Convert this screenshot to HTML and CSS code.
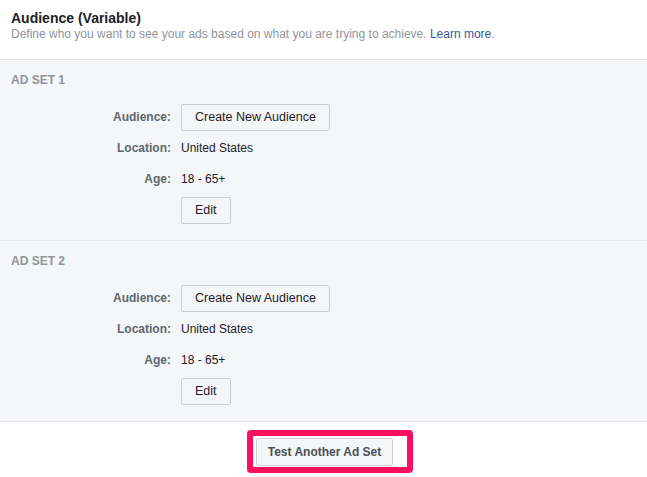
FILE: index.html
```html
<!DOCTYPE html>
<html lang="en">
<head>
<meta charset="utf-8">
<title>Audience (Variable)</title>
<link rel="stylesheet" href="styles.css">
</head>
<body>
<div class="panel">
  <div class="panel-head">
    <div class="title">Audience (Variable)</div>
    <div class="subtitle">Define who you want to see your ads based on what you are trying to achieve. <a class="link" href="#">Learn more</a>.</div>
  </div>
  <div class="sets">
    <section class="adset">
      <div class="adset-name">AD SET 1</div>
      <div class="fields">
        <div class="label">Audience:</div>
        <div class="value"><button class="btn">Create New Audience</button></div>
        <div class="label">Location:</div>
        <div class="value">United States</div>
        <div class="label">Age:</div>
        <div class="value">18 - 65+</div>
        <div class="label"></div>
        <div class="value"><button class="btn">Edit</button></div>
      </div>
    </section>
    <section class="adset">
      <div class="adset-name">AD SET 2</div>
      <div class="fields">
        <div class="label">Audience:</div>
        <div class="value"><button class="btn">Create New Audience</button></div>
        <div class="label">Location:</div>
        <div class="value">United States</div>
        <div class="label">Age:</div>
        <div class="value">18 - 65+</div>
        <div class="label"></div>
        <div class="value"><button class="btn">Edit</button></div>
      </div>
    </section>
  </div>
  <div class="panel-foot">
    <span class="highlight"><button class="btn btn-strong">Test Another Ad Set</button></span>
  </div>
</div>
</body>
</html>
```

FILE: styles.css
```css
* { box-sizing: border-box; }

html, body {
  margin: 0;
  padding: 0;
  background: #ffffff;
}

body {
  font-family: "Liberation Sans", Arial, Helvetica, sans-serif;
  color: #1d2129;
  width: 647px;
  height: 477px;
  overflow: hidden;
}

.panel-head {
  padding: 10px 11px 17px;
}

.title {
  font-size: 14px;
  line-height: 16px;
  font-weight: bold;
  color: #1d2129;
}

.subtitle {
  font-size: 12px;
  line-height: 16px;
  color: #90949c;
}

.link {
  color: #365899;
  text-decoration: none;
}

.sets {
  border-top: 1px solid #e5e6e9;
}

.adset {
  background: #f5f6f7;
  border-bottom: 1px solid #e5e6e9;
  padding: 12px 11px 17px;
  display: flex;
  flex-direction: column;
  gap: 15px;
}

.adset-name {
  font-size: 12px;
  line-height: 16px;
  font-weight: bold;
  color: #90949c;
}

.fields {
  display: grid;
  grid-template-columns: 160px auto;
  grid-auto-rows: 27px;
  column-gap: 10px;
  row-gap: 4px;
  font-size: 12px;
}

.label {
  text-align: right;
  color: #606770;
  font-weight: bold;
  display: flex;
  align-items: center;
  justify-content: flex-end;
  padding-top: 1px;
}

.value {
  color: #1d2129;
  display: flex;
  align-items: center;
  padding-top: 1px;
}

.btn {
  font-family: "Liberation Sans", Arial, Helvetica, sans-serif;
  font-size: 12.5px;
  color: #1d2129;
  background: #f5f6f7;
  border: 1px solid #ced0d4;
  border-radius: 2px;
  height: 27px;
  padding: 0 13px;
  margin: 0;
  line-height: 25px;
  cursor: pointer;
}

.btn-strong {
  font-size: 12px;
  font-weight: bold;
  height: 28px;
  padding: 0 11px;
  color: #4b4f56;
  position: relative;
  z-index: 1;
}

.panel-foot {
  display: flex;
  justify-content: center;
  padding-top: 16px;
}

.highlight {
  position: relative;
  display: inline-block;
  margin-left: 2px;
}

.highlight::after {
  content: "";
  position: absolute;
  left: -9px;
  top: -8px;
  right: -20px;
  bottom: -7px;
  border: 6px solid #fc105e;
  border-radius: 4px;
  pointer-events: none;
}
```
